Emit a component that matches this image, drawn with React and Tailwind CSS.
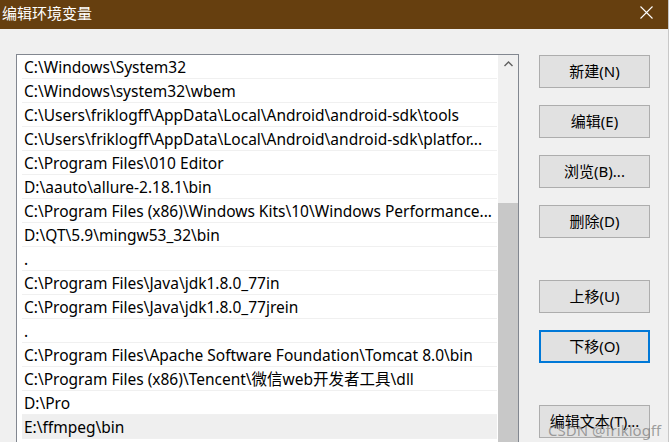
import React from "react";

const rows = [
  "C:\\Windows\\System32",
  "C:\\Windows\\system32\\wbem",
  "C:\\Users\\friklogff\\AppData\\Local\\Android\\android-sdk\\tools",
  "C:\\Users\\friklogff\\AppData\\Local\\Android\\android-sdk\\platfor...",
  "C:\\Program Files\\010 Editor",
  "D:\\aauto\\allure-2.18.1\\bin",
  "C:\\Program Files (x86)\\Windows Kits\\10\\Windows Performance...",
  "D:\\QT\\5.9\\mingw53_32\\bin",
  ".",
  "C:\\Program Files\\Java\\jdk1.8.0_77in",
  "C:\\Program Files\\Java\\jdk1.8.0_77jrein",
  ".",
  "C:\\Program Files\\Apache Software Foundation\\Tomcat 8.0\\bin",
  "C:\\Program Files (x86)\\Tencent\\微信web开发者工具\\dll",
  "D:\\Pro",
  "E:\\ffmpeg\\bin",
  "",
];

const font = { fontFamily: '"Noto Sans", "Noto Sans CJK SC", sans-serif' };

function Btn({ children, focused, className = "" }) {
  return (
    <div
      className={
        "w-[111px] h-[33px] flex items-center justify-center bg-[#e1e1e1] text-[15px] text-black " +
        (focused ? "border-2 border-[#0078d7] " : "border border-[#adadad] ") +
        className
      }
    >
      {children}
    </div>
  );
}

export default function App() {
  return (
    <div
      className="relative w-[669px] h-[442px] overflow-hidden bg-[#f0f0f0] border-r border-r-[#c8c8c8]"
      style={font}
    >
      <div className="h-[29px] bg-[#663f0f] flex items-center justify-between pl-[2px] pr-[15px]">
        <span className="text-white text-[15px] leading-none -mt-[4px] font-['Noto_Sans_CJK_SC',sans-serif]">
          编辑环境变量
        </span>
        <svg width="13" height="13" viewBox="0 0 13 13" className="-mt-[4px]">
          <path d="M0.5 0.5 L12.5 12.5 M12.5 0.5 L0.5 12.5" stroke="#ffffff" strokeWidth="1.1" fill="none" />
        </svg>
      </div>

      <div className="flex pl-[16px] pt-[25px] gap-[20px]">
        <div className="w-[503px] h-[400px] border border-[#828790] bg-white flex">
          <div className="flex-1 pl-[5px] pr-[1px]">
            {rows.map((r, i) => (
              <div
                key={i}
                className={
                  "h-[24px] border-b border-b-[#f0f0f0] pl-[2px] pt-[2px] flex items-center text-[15.5px] text-black whitespace-nowrap overflow-hidden " +
                  (i === 15 ? "bg-[#efefef]" : "")
                }
              >
                {r}
              </div>
            ))}
          </div>
          <div className="w-[20px] bg-[#f0f0f0] flex flex-col">
            <div className="h-[17px] flex items-center justify-center">
              <svg width="9" height="6" viewBox="0 0 9 6">
                <path d="M0.5 5 L4.5 1 L8.5 5" stroke="#606060" strokeWidth="1.4" fill="none" />
              </svg>
            </div>
            <div className="h-[131px]" />
            <div className="flex-1 bg-[#c8c8c8]" />
          </div>
        </div>

        <div className="flex flex-col pt-[1px]">
          <Btn>新建(N)</Btn>
          <Btn className="mt-[17px]">编辑(E)</Btn>
          <Btn className="mt-[17px]">浏览(B)...</Btn>
          <Btn className="mt-[17px]">删除(D)</Btn>
          <Btn className="mt-[42px]">上移(U)</Btn>
          <Btn className="mt-[17px]" focused>下移(O)</Btn>
          <Btn className="mt-[42px]">编辑文本(T)...</Btn>
        </div>
      </div>

      <div className="absolute left-[548px] top-[419px] text-[15px] text-[#7a7a7a]/70 whitespace-nowrap">
        CSDN @friklogff
      </div>
    </div>
  );
}
